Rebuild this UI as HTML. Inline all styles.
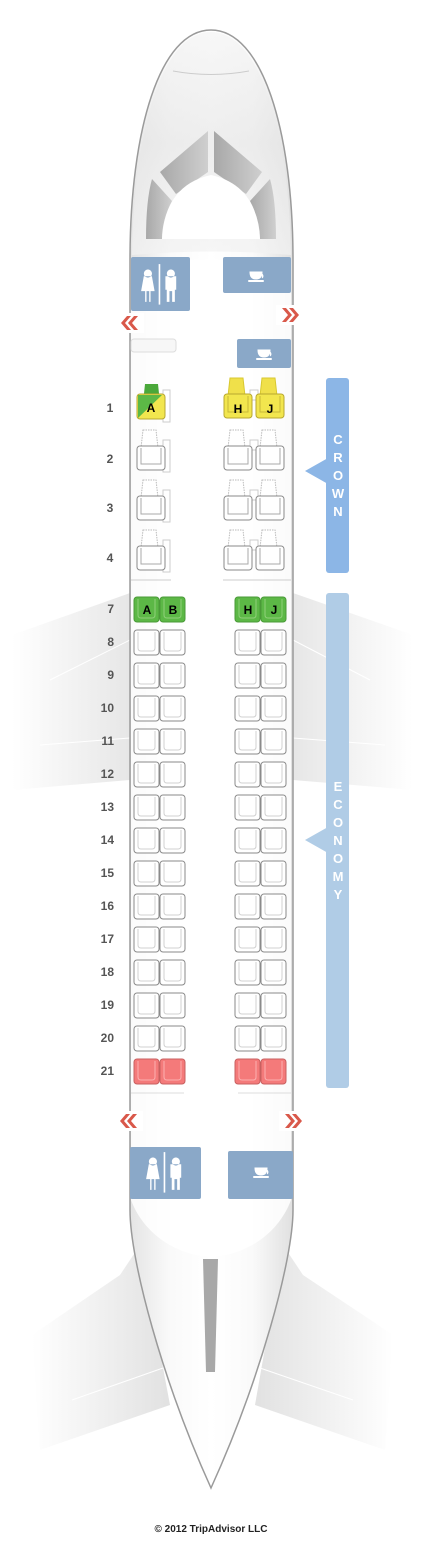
<!DOCTYPE html>
<html><head><meta charset="utf-8"><style>
html,body{margin:0;padding:0;background:#fff;}
svg{display:block}
text{font-family:"Liberation Sans",Arial,sans-serif;font-weight:bold;}
</style></head><body>
<svg width="425" height="1561" viewBox="0 0 425 1561" xmlns="http://www.w3.org/2000/svg">
<defs>
<linearGradient id="body" x1="0" x2="1" y1="0" y2="0">
<stop offset="0" stop-color="#e4e4e4"/><stop offset="0.25" stop-color="#fafafa"/><stop offset="0.5" stop-color="#fff"/><stop offset="0.75" stop-color="#fafafa"/><stop offset="1" stop-color="#e0e0e0"/></linearGradient>
<linearGradient id="nose" x1="0" x2="0" y1="0" y2="1"><stop offset="0" stop-color="#f4f4f4"/><stop offset="0.5" stop-color="#e6e6e6"/><stop offset="1" stop-color="#f2f2f2"/></linearGradient>
<linearGradient id="wl" x1="0" x2="1"><stop offset="0" stop-color="#fff"/><stop offset="1" stop-color="#dcdcdc"/></linearGradient>
<linearGradient id="wr" x1="1" x2="0"><stop offset="0" stop-color="#fff"/><stop offset="1" stop-color="#dcdcdc"/></linearGradient>
<linearGradient id="win" x1="0" x2="1"><stop offset="0" stop-color="#a8a8a8"/><stop offset="1" stop-color="#cfcfcf"/></linearGradient>
<g id="es"><rect x="0" y="0" width="25" height="25" rx="3" fill="#fff" stroke="#8a8a8a" stroke-width="1"/><path d="M4 2 V18 Q4 21 7 21 H18 Q21 21 21 18 V2" fill="none" stroke="#d0d0d0"/></g>
<g id="gs"><rect x="0" y="0" width="25" height="25" rx="3" fill="#5cb846" stroke="#4a9a38"/><path d="M4 2 V18 Q4 21 7 21 H18 Q21 21 21 18 V2" fill="none" stroke="#8fd07a"/></g>
<g id="rs"><rect x="0" y="0" width="25" height="25" rx="3" fill="#f47a7a" stroke="#c86060"/><path d="M4 2 V18 Q4 21 7 21 H18 Q21 21 21 18 V2" fill="none" stroke="#fbb0b0"/></g>
<g id="cs"><path d="M6 -8 H19 L21 10 H4 Z" fill="#fff" stroke="#bbb" stroke-dasharray="1.5 1"/><rect x="0" y="8" width="28" height="24" rx="3" fill="#fff" stroke="#8a8a8a"/><path d="M4 10 V26 H24 V10" fill="none" stroke="#aaa"/></g>
<g id="ys"><path d="M6 -8 H19 L21 10 H4 Z" fill="#f0e04a" stroke="#d8c830"/><rect x="0" y="8" width="28" height="24" rx="3" fill="#f2e64e" stroke="#b8a830"/><path d="M4 10 V26 H24 V10" fill="none" stroke="#c8b838"/></g>
<g id="lav"><g transform="scale(1.35)"><path d="M-9 -10 a3 3 0 1 0 0.1 0 M-12 -5 H-6 L-4 6 H-7 V14 H-8 V6 H-10 V14 H-11 V6 H-14 Z" fill="#fff"/><rect x="-1" y="-14" width="1.2" height="30" fill="#fff"/><path d="M8 -10 a3 3 0 1 0 0.1 0 M4 -5 H12 V5 H11 V14 H9 V6 H7 V14 H5 V5 H4 Z" fill="#fff"/></g></g>
<g id="cup"><path d="M-7 -4 H5 Q5 3 -1 3 Q-7 3 -7 -4 Z M5 -2 a2.5 2.5 0 0 1 0 4" fill="#fff" stroke="#fff" stroke-width="1"/><rect x="-9" y="4" width="16" height="2" rx="1" fill="#fff"/></g>
<g id="exl"><path d="M-3 0 l8 -10 h18 v20 h-18z" fill="#fff"/><path d="M0 0 l6 -7 h4 l-6 7 l6 7 h-4z M7 0 l6 -7 h4 l-6 7 l6 7 h-4z" fill="#d9584a"/></g>
<g id="exr"><path d="M20 0 l-8 -10 h-18 v20 h18z" fill="#fff"/><path d="M17 0 l-6 -7 h-4 l6 7 l-6 7 h4z M10 0 l-6 -7 h-4 l6 7 l-6 7 h4z" fill="#d9584a"/></g>
</defs>
<path d="M130 593 L12 635 L12 790 L130 780 Z" fill="url(#wl)" opacity="0.7"/>
<path d="M293 593 L413 635 L413 790 L293 780 Z" fill="url(#wr)" opacity="0.7"/>
<path d="M130 640 L50 680 M130 738 L40 745 M293 640 L370 680 M293 738 L385 745" stroke="#fff" stroke-width="1"/>
<path d="M140 1245 L120 1275 L32 1335 L40 1450 L170 1405 Z" fill="url(#wl)" opacity="0.85"/>
<path d="M283 1245 L303 1275 L393 1335 L385 1450 L255 1405 Z" fill="url(#wr)" opacity="0.85"/>
<path d="M72 1400 L163 1368 M353 1400 L260 1368" stroke="#fff"/>
<path d="M130 260 C130 130 160 30 211 30 C262 30 293 130 293 260 L293 1210 C293 1260 260 1380 211 1488 C162 1380 130 1260 130 1210 Z" fill="url(#body)" stroke="#9a9a9a" stroke-width="1.5"/>
<path d="M132 255 C134 130 162 32 211 32 C260 32 289 130 291 255 Q211 248 132 255 Z" fill="url(#nose)" opacity="0.7"/>
<path d="M131 270 C140 256 280 256 291 270 L291 1200 C280 1230 250 1255 211 1257 C172 1255 142 1230 131 1200 Z" fill="#fff" opacity="0.85"/>
<path d="M203 1259 L218 1259 L215 1372 L206 1372 Z" fill="#a8a8a8"/>
<path d="M173 71 Q211 78 249 71" fill="none" stroke="#ccc"/>
<path d="M160 172 L208 131 L208 172 L176 194 Z" fill="url(#win)"/>
<path d="M262 172 L214 131 L214 172 L246 194 Z" fill="url(#win)"/>
<path d="M152 179 L172 201 Q162 220 162 239 L146 239 Q146 200 152 179 Z" fill="url(#win)"/>
<path d="M270 179 L250 201 Q260 220 260 239 L276 239 Q276 200 270 179 Z" fill="url(#win)"/>
<path d="M162 239 Q165 185 211 175 Q257 185 260 239 Z" fill="#fff"/>
<rect x="131" y="257" width="59" height="54" rx="2" fill="#8aa8c8"/>
<use href="#lav" x="160" y="283"/>
<rect x="223" y="257" width="68" height="36" rx="2" fill="#8aa8c8"/>
<use href="#cup" x="257" y="276"/>
<rect x="237" y="339" width="54" height="29" rx="2" fill="#8aa8c8"/>
<use href="#cup" x="265" y="354"/>
<rect x="131" y="339" width="45" height="13" rx="3" fill="#f7f7f7" stroke="#ddd"/>
<use href="#exl" x="121" y="323"/>
<use href="#exr" x="282" y="315"/>
<g font-size="12" fill="#555" text-anchor="middle">
<text x="110" y="412">1</text><text x="110" y="463">2</text><text x="110" y="512">3</text><text x="110" y="562">4</text>
</g>
<rect x="163" y="390" width="7" height="32" fill="#fff" stroke="#ccc"/>
<rect x="163" y="440" width="7" height="32" fill="#fff" stroke="#ccc"/>
<rect x="163" y="490" width="7" height="32" fill="#fff" stroke="#ccc"/>
<rect x="163" y="540" width="7" height="32" fill="#fff" stroke="#ccc"/>
<rect x="250" y="390" width="8" height="10" fill="#fff" stroke="#ccc"/>
<rect x="250" y="440" width="8" height="10" fill="#fff" stroke="#ccc"/>
<rect x="250" y="490" width="8" height="10" fill="#fff" stroke="#ccc"/>
<rect x="250" y="540" width="8" height="10" fill="#fff" stroke="#ccc"/>
<path d="M145 384 H158 L160 403 H143 Z" fill="#4aa83a"/>
<rect x="137" y="394" width="28" height="25" rx="3" fill="#f2e64e" stroke="#b8a830"/>
<path d="M138 395 H162 L138 418 Z" fill="#5cb846"/>
<text x="151" y="412" font-size="12" text-anchor="middle">A</text>
<use href="#ys" x="224" y="386"/><use href="#ys" x="256" y="386"/>
<text x="238" y="413" font-size="12" text-anchor="middle">H</text><text x="270" y="413" font-size="12" text-anchor="middle">J</text>
<use href="#cs" x="137" y="438"/><use href="#cs" x="224" y="438"/><use href="#cs" x="256" y="438"/>
<use href="#cs" x="137" y="488"/><use href="#cs" x="224" y="488"/><use href="#cs" x="256" y="488"/>
<use href="#cs" x="137" y="538"/><use href="#cs" x="224" y="538"/><use href="#cs" x="256" y="538"/>
<path d="M131 580 H171 M223 580 H291" stroke="#ddd" stroke-width="1.5"/>
<rect x="326" y="378" width="23" height="195" rx="3" fill="#8cb6e6"/>
<path d="M305 471 L328 458 L328 484 Z" fill="#8cb6e6"/>
<g font-size="13" fill="#fff" text-anchor="middle">
<text x="338" y="444">C</text><text x="338" y="462">R</text><text x="338" y="480">O</text><text x="338" y="498">W</text><text x="338" y="516">N</text>
</g>
<rect x="326" y="593" width="23" height="495" rx="3" fill="#b0cce6"/>
<path d="M305 840 L328 827 L328 853 Z" fill="#b0cce6"/>
<g font-size="13" fill="#fff" text-anchor="middle">
<text x="338" y="791">E</text><text x="338" y="809">C</text><text x="338" y="827">O</text><text x="338" y="845">N</text><text x="338" y="863">O</text><text x="338" y="881">M</text><text x="338" y="899">Y</text>
</g>
<g font-size="12" fill="#555" text-anchor="end">
<text x="114" y="613">7</text><text x="114" y="646">8</text><text x="114" y="679">9</text><text x="114" y="712">10</text><text x="114" y="745">11</text><text x="114" y="778">12</text><text x="114" y="811">13</text><text x="114" y="844">14</text><text x="114" y="877">15</text><text x="114" y="910">16</text><text x="114" y="943">17</text><text x="114" y="976">18</text><text x="114" y="1009">19</text><text x="114" y="1042">20</text><text x="114" y="1075">21</text>
</g>
<use href="#gs" x="134" y="597"/><use href="#gs" x="160" y="597"/><use href="#gs" x="235" y="597"/><use href="#gs" x="261" y="597"/>
<g font-size="12" text-anchor="middle"><text x="147" y="614">A</text><text x="173" y="614">B</text><text x="248" y="614">H</text><text x="274" y="614">J</text></g>
<g>
<use href="#es" x="134" y="630"/><use href="#es" x="160" y="630"/><use href="#es" x="235" y="630"/><use href="#es" x="261" y="630"/>
<use href="#es" x="134" y="663"/><use href="#es" x="160" y="663"/><use href="#es" x="235" y="663"/><use href="#es" x="261" y="663"/>
<use href="#es" x="134" y="696"/><use href="#es" x="160" y="696"/><use href="#es" x="235" y="696"/><use href="#es" x="261" y="696"/>
<use href="#es" x="134" y="729"/><use href="#es" x="160" y="729"/><use href="#es" x="235" y="729"/><use href="#es" x="261" y="729"/>
<use href="#es" x="134" y="762"/><use href="#es" x="160" y="762"/><use href="#es" x="235" y="762"/><use href="#es" x="261" y="762"/>
<use href="#es" x="134" y="795"/><use href="#es" x="160" y="795"/><use href="#es" x="235" y="795"/><use href="#es" x="261" y="795"/>
<use href="#es" x="134" y="828"/><use href="#es" x="160" y="828"/><use href="#es" x="235" y="828"/><use href="#es" x="261" y="828"/>
<use href="#es" x="134" y="861"/><use href="#es" x="160" y="861"/><use href="#es" x="235" y="861"/><use href="#es" x="261" y="861"/>
<use href="#es" x="134" y="894"/><use href="#es" x="160" y="894"/><use href="#es" x="235" y="894"/><use href="#es" x="261" y="894"/>
<use href="#es" x="134" y="927"/><use href="#es" x="160" y="927"/><use href="#es" x="235" y="927"/><use href="#es" x="261" y="927"/>
<use href="#es" x="134" y="960"/><use href="#es" x="160" y="960"/><use href="#es" x="235" y="960"/><use href="#es" x="261" y="960"/>
<use href="#es" x="134" y="993"/><use href="#es" x="160" y="993"/><use href="#es" x="235" y="993"/><use href="#es" x="261" y="993"/>
<use href="#es" x="134" y="1026"/><use href="#es" x="160" y="1026"/><use href="#es" x="235" y="1026"/><use href="#es" x="261" y="1026"/>
<use href="#rs" x="134" y="1059"/><use href="#rs" x="160" y="1059"/><use href="#rs" x="235" y="1059"/><use href="#rs" x="261" y="1059"/>
</g>
<path d="M131 1093 H184 M238 1093 H291" stroke="#ddd"/>
<use href="#exl" x="120" y="1121"/>
<use href="#exr" x="285" y="1121"/>
<rect x="130" y="1147" width="71" height="52" rx="2" fill="#8aa8c8"/>
<use href="#lav" x="165" y="1171"/>
<rect x="228" y="1151" width="65" height="48" rx="2" fill="#8aa8c8"/>
<use href="#cup" x="262" y="1172"/>
<text x="211" y="1532" font-size="10" fill="#222" text-anchor="middle">© 2012 TripAdvisor LLC</text>
</svg>
</body></html>
